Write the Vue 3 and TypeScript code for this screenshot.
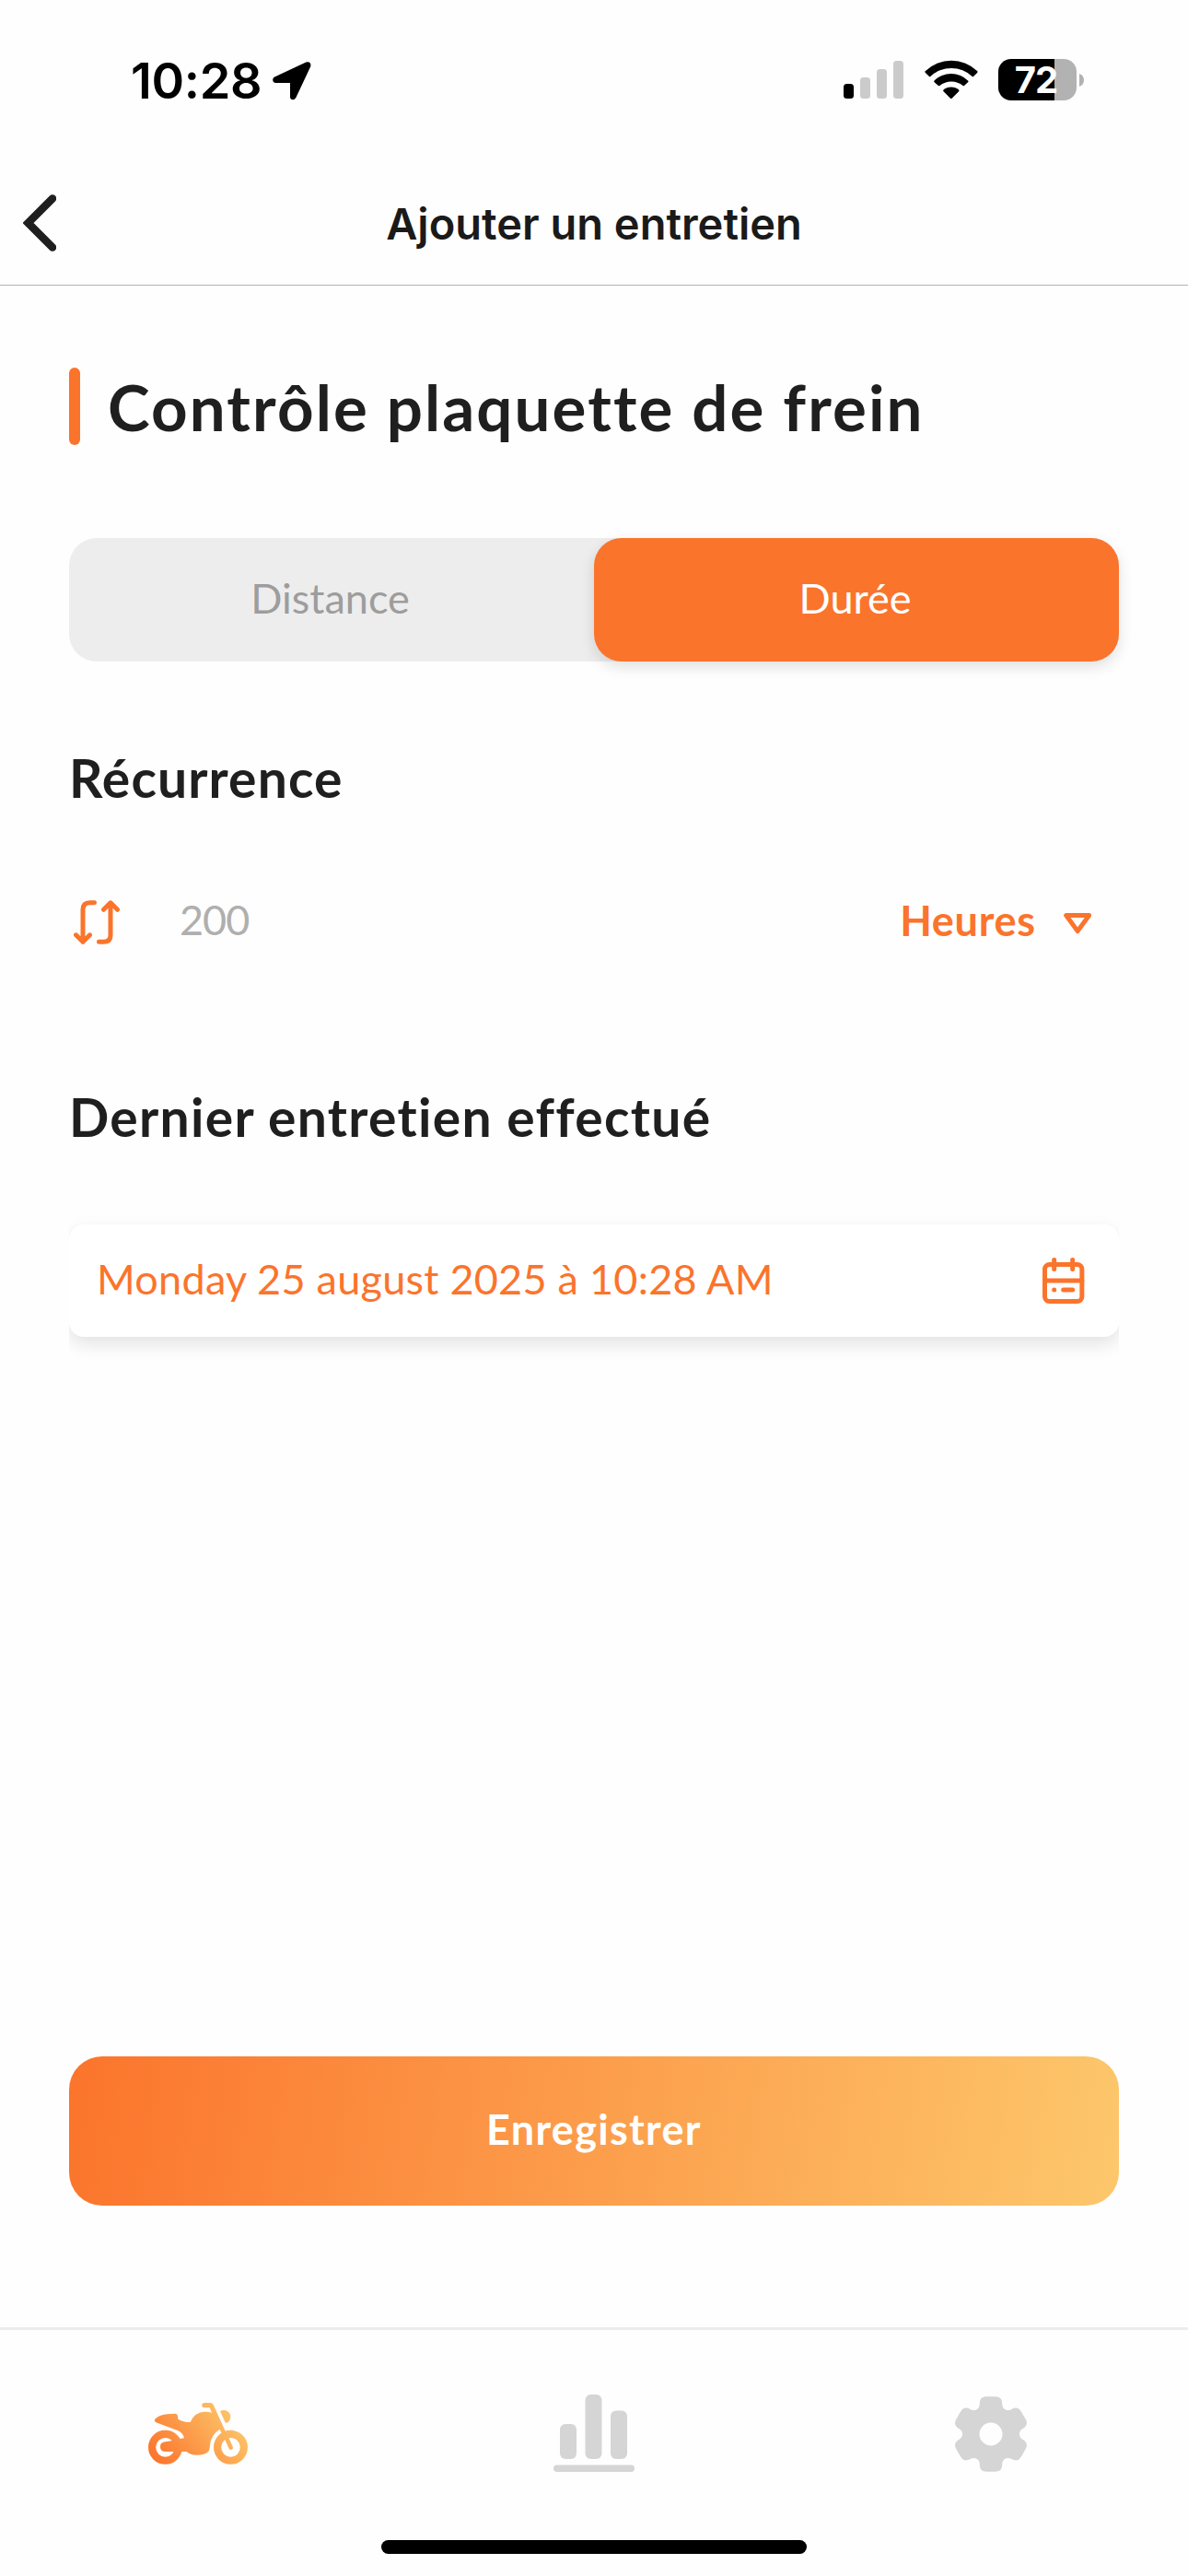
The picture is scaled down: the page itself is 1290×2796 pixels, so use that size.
<script setup lang="ts">
import { ref } from 'vue'

type Mode = 'Distance' | 'Durée'

const modes: Mode[] = ['Distance', 'Durée']
const mode = ref<Mode>('Durée')
const recurrence = ref('200')
const unit = ref('Heures')
const lastService = ref('Monday 25 august 2025 à 10:28 AM')
const signalBars = [16, 23, 32, 41]

// One sixth of the cog outline, repeated around the centre.
const tooth: [number, number][] = [
  [-15.5, -26.8], [-13.3, -28], [-12.2, -30], [-12.2, -33],
  [-12.2, -38.5], [-9.5, -40.7], [-4.5, -40.7],
  [-2, -40.7], [2, -40.7], [4.5, -40.7],
  [9.5, -40.7], [12.2, -38.5], [12.2, -33],
  [12.2, -30], [13.3, -28], [15.5, -26.8],
]

function cogPath(): string {
  let d = ''
  for (let i = 0; i < 6; i++) {
    const a = (i * Math.PI) / 3
    const pts = tooth.map(([x, y]) =>
      `${(x * Math.cos(a) - y * Math.sin(a)).toFixed(2)} ${(x * Math.sin(a) + y * Math.cos(a)).toFixed(2)}`)
    d += (i === 0 ? `M${pts[0]}` : `L${pts[0]}`) + `C${pts.slice(1).join(' ')}`
  }
  return d + 'Z M12.5 0A12.5 12.5 0 1 0 -12.5 0A12.5 12.5 0 1 0 12.5 0Z'
}
const cog = cogPath()
</script>

<template>
  <div class="screen">
    <div class="status">
      <div class="clock">
        <span class="time">10:28</span>
        <svg class="location" viewBox="888 82 126 125">
          <path d="M893 132 L997 83.500 Q1014 80 1012 97 L964 199 Q960 206 954 206 Q945 205 945 197 V151 H898 Q889 150 888.500 141 Q888.500 135 893 132Z" />
        </svg>
      </div>
      <div class="indicators">
        <div class="signal">
          <i v-for="(h, i) in signalBars" :key="h" :class="{ on: i === 0 }" :style="{ height: h + 'px' }"></i>
        </div>
        <svg class="wifi" viewBox="431 75 174 126">
          <path d="M433 112 A122 122 0 0 1 603 112 Q604 114 603 116 L590 129 Q588 131 586 129 A99 99 0 0 0 450 129 Q448 131 446 129 L433 116 Q431 114 433 112Z" />
          <path d="M462 143 A78 78 0 0 1 573 143 Q574 145 573 147 L560 159 Q558 161 556 159 A60 60 0 0 0 480 159 Q478 161 476 159 L462 147 Q461 145 462 143Z" />
          <path d="M492 173 A38 38 0 0 1 543 173 Q544 175 543 177 L520 200 Q517.500 202 515 200 L492 177 Q491 175 492 173Z" />
        </svg>
        <div class="battery">
          <div class="cell"><span>72</span></div>
          <svg class="nub" viewBox="0 0 5 14"><path d="M0 0Q5 2 5 7T0 14Z" /></svg>
        </div>
      </div>
    </div>

    <header class="nav">
      <svg class="back" viewBox="0 0 36 62">
        <path d="M32 4.500 L5.500 31 L32 57.500" />
      </svg>
      <h1>Ajouter un entretien</h1>
    </header>

    <main>
      <div class="heading">
        <i class="accent"></i>
        <h2>Contrôle plaquette de frein</h2>
      </div>

      <div class="segments">
        <button v-for="m in modes" :key="m" :class="{ active: m === mode }" @click="mode = m">
          <span>{{ m }}</span>
        </button>
      </div>

      <h3 class="label-recurrence">Récurrence</h3>
      <div class="recurrence">
        <svg class="repeat" viewBox="60 531 150 145">
          <path d="M127.500 539 H113 Q90 539 90 562 V667 M67.500 644.500 L90 667 L112.500 644.500 M142.500 667 H158 Q180 667 180 645 V540 M157.500 562 L180 539.500 L202.500 562" />
        </svg>
        <span class="value">{{ recurrence }}</span>
        <span class="unit">{{ unit }}</span>
        <svg class="caret" viewBox="645 123 91 67">
          <path d="M653 130.500 H728 L690.500 182Z" />
        </svg>
      </div>

      <h3 class="label-last">Dernier entretien effectué</h3>
      <div class="date-wrap">
        <div class="date">
          <span>{{ lastService }}</span>
          <svg class="calendar" viewBox="217 195 137 150">
            <rect x="224.500" y="217.500" width="121" height="120" rx="15" />
            <path d="M224.500 270 H345.500 M255 202.500 V232.500 M315 202.500 V232.500 M255 300 H255.100 M285 300 H315" />
          </svg>
        </div>
      </div>

      <button class="save"><span>Enregistrer</span></button>
    </main>

    <footer>
      <nav class="tabs">
        <div class="tab">
          <svg class="moto" viewBox="93 291 324 201">
            <defs>
              <linearGradient id="motoFill" gradientUnits="userSpaceOnUse" x1="120" y1="490" x2="360" y2="300">
                <stop offset="0" stop-color="#fb742c" />
                <stop offset="1" stop-color="#fdc76b" />
              </linearGradient>
            </defs>
            <g fill="none" stroke="url(#motoFill)" stroke-width="24.500">
              <circle cx="148.500" cy="436" r="43.200" />
              <circle cx="361.500" cy="436" r="43.200" />
              <path d="M342 392 L362 437" stroke-width="14" stroke-linecap="round" />
            </g>
            <g fill="url(#motoFill)">
              <path d="M114 346 Q124 327 182 326 Q190 326 190 344 Q206 354 230 354 Q243 321 279 320 Q290 320 300 323 L293 307 H277 Q268 307 268 299 Q268 291 277 291 H295 Q302 291 305 297 L344 383 L331 389 L326 377 A68 68 0 0 0 293.500 432 Q295 461 253 461 Q228 461 218 450 H150 Q132 450 132 434 Q132 419 150 418 L172 414 L197 408 L210 406 Q205 388 190 382 L118 355 Q112 352 114 346Z" />
              <path d="M329 317 Q334 314 342 315 Q361 319 361 338 Q359 352 349 356 Q345 357 343 353 L328 320 Q327 318 329 317Z" />
            </g>
          </svg>
        </div>
        <div class="tab">
          <svg class="chart" viewBox="601 2599 88 84.500">
            <rect x="608" y="2631" width="18" height="38" rx="6" />
            <rect x="635.500" y="2599" width="18" height="70" rx="6" />
            <rect x="663" y="2616.500" width="18" height="52.500" rx="6" />
            <rect x="601" y="2675.500" width="88" height="7.500" rx="3.750" />
          </svg>
        </div>
        <div class="tab">
          <svg class="cog" viewBox="-41 -41 82 82"><path :d="cog" fill-rule="evenodd" /></svg>
        </div>
      </nav>
      <div class="home"></div>
    </footer>
  </div>
</template>

<style>
body { margin: 0; background: #fefefe; }
</style>

<style scoped>
.screen {
  width: 1290px;
  height: 2796px;
  display: flex;
  flex-direction: column;
  overflow: hidden;
  background: #fefefe;
  color: #1f1f1f;
  font-family: Lato, "Open Sans", sans-serif;
  font-kerning: normal;
}
svg { display: block; flex: none; }
h1, h2, h3 { margin: 0; white-space: nowrap; }
span { white-space: nowrap; }
button { border: 0; padding: 0; margin: 0; background: none; font: inherit; color: inherit; }

.status {
  height: 174px;
  box-sizing: border-box;
  padding: 0 113px 0 142px;
  display: flex;
  justify-content: space-between;
  align-items: flex-start;
  font-family: Inter, sans-serif;
}
.clock { display: flex; align-items: center; height: 64px; margin-top: 56px; }
.time { width: 154px; font-size: 54px; font-weight: 600; line-height: 64px; letter-spacing: -0.3px; color: #000; }
.location { width: 42px; height: 41.700px; }
.indicators { display: flex; align-items: flex-end; height: 45px; margin-top: 64px; }
.signal { display: flex; align-items: flex-end; gap: 7px; height: 43px; margin-bottom: 2px; }
.signal i { width: 11px; border-radius: 3.500px; background: #cbcbcb; }
.signal .on { background: #000; }
.wifi { width: 58px; height: 42px; margin: 0 22px 2px 23px; }
.battery { display: flex; align-items: center; gap: 3px; }
.cell {
  width: 85px; height: 45px; border-radius: 14px;
  display: flex; align-items: center; justify-content: center;
  background: linear-gradient(90deg, #000 61px, #b2b2b2 61px);
}
.cell span { color: #fff; font-size: 40px; font-weight: 700; line-height: 45px; letter-spacing: -1px; padding-right: 3px; }
.nub { width: 5px; height: 14px; fill: #b2b2b2; }

.nav {
  height: 136px;
  box-sizing: border-box;
  border-bottom: 1px solid #b3b3b3;
  padding: 0 25px;
  display: grid;
  grid-template-columns: 36px 1fr 36px;
  align-items: center;
}
.back { width: 36px; height: 62px; margin-top: 1px; fill: none; stroke: #1f1f1f; stroke-width: 8.500; stroke-linecap: round; }
h1 {
  text-align: center; font-family: Inter, sans-serif; font-size: 47px; font-weight: 600;
  line-height: 60px; letter-spacing: 0; padding-top: 2px; color: #1a1a1a;
}

main { flex: 1; padding: 89px 75px 0; display: flex; flex-direction: column; }
.heading { display: flex; gap: 30px; height: 84px; }
.accent { width: 12px; border-radius: 6px; background: #fb742c; }
h2 { font-size: 69px; line-height: 86px; font-weight: 700; letter-spacing: 2.1px; }

.segments {
  display: grid; grid-template-columns: 1fr 1fr; height: 134px;
  margin-top: 101px; border-radius: 30px; background: #ededed;
}
.segments button {
  display: flex; align-items: center; justify-content: center; padding: 0 3px 5px 0;
  border-radius: 30px; font-size: 45px; color: #9d9d9d;
}
.segments .active { background: #fb742c; color: #fff; box-shadow: 0 6px 16px rgba(0, 0, 0, 0.12); }

h3 { font-size: 57px; line-height: 70px; height: 68px; font-weight: 700; }
.label-recurrence { margin-top: 91px; letter-spacing: 1.1px; }
.recurrence { display: flex; align-items: center; height: 86px; margin-top: 81px; padding: 0 30px 0 5px; font-size: 45px; }
.recurrence span { padding-bottom: 6px; }
.repeat { width: 50px; height: 48.300px; fill: none; stroke: #fb742c; stroke-width: 15; stroke-linecap: round; stroke-linejoin: round; }
.value { margin-left: 65px; color: #afafaf; letter-spacing: -1px; }
.recurrence .unit { margin-left: auto; color: #fb742c; font-weight: 700; letter-spacing: 0.7px; padding-bottom: 5px; }
.caret { width: 30.300px; height: 22.300px; margin-left: 30px; margin-top: 3px; fill: none; stroke: #fb742c; stroke-width: 15; stroke-linejoin: round; }

.label-last { margin-top: 133px; letter-spacing: 1.300px; }
.date-wrap { margin-top: 84px; clip-path: inset(-60px 0); }
.date {
  height: 122px; box-sizing: border-box; border-radius: 16px; background: #fff;
  padding: 0 37px 0 30px; display: flex; align-items: center; justify-content: space-between;
  box-shadow: 0 8px 20px rgba(0, 0, 0, 0.11); color: #fb742c; font-size: 45px; letter-spacing: 0.250px;
}
.date span { padding-bottom: 5px; }
.calendar { width: 45.700px; height: 50px; fill: none; stroke: #fb742c; stroke-width: 15; stroke-linecap: round; }

.save {
  height: 162px; margin-top: 781px; border-radius: 36px; color: #fff;
  font-size: 45px; font-weight: 700; padding-bottom: 4px; letter-spacing: 1.300px;
  background: linear-gradient(98deg, #fb742c 0%, #fdc76b 100%);
}

footer { height: 270px; box-sizing: border-box; border-top: 3px solid #ececec; display: flex; flex-direction: column; align-items: center; }
.tabs { width: 1290px; height: 228px; display: grid; grid-template-columns: repeat(3, 1fr); }
.tab { display: flex; align-items: center; justify-content: center; }
.moto { width: 108px; height: 67px; margin-bottom: 4px; }
.chart { width: 88px; height: 84.500px; margin-bottom: 3px; fill: #d5d5d5; }
.cog { width: 82px; height: 82px; margin: 0 0 3px 1px; fill: #d5d5d5; }
.home { width: 462px; height: 15px; border-radius: 8px; background: #000; }
</style>
